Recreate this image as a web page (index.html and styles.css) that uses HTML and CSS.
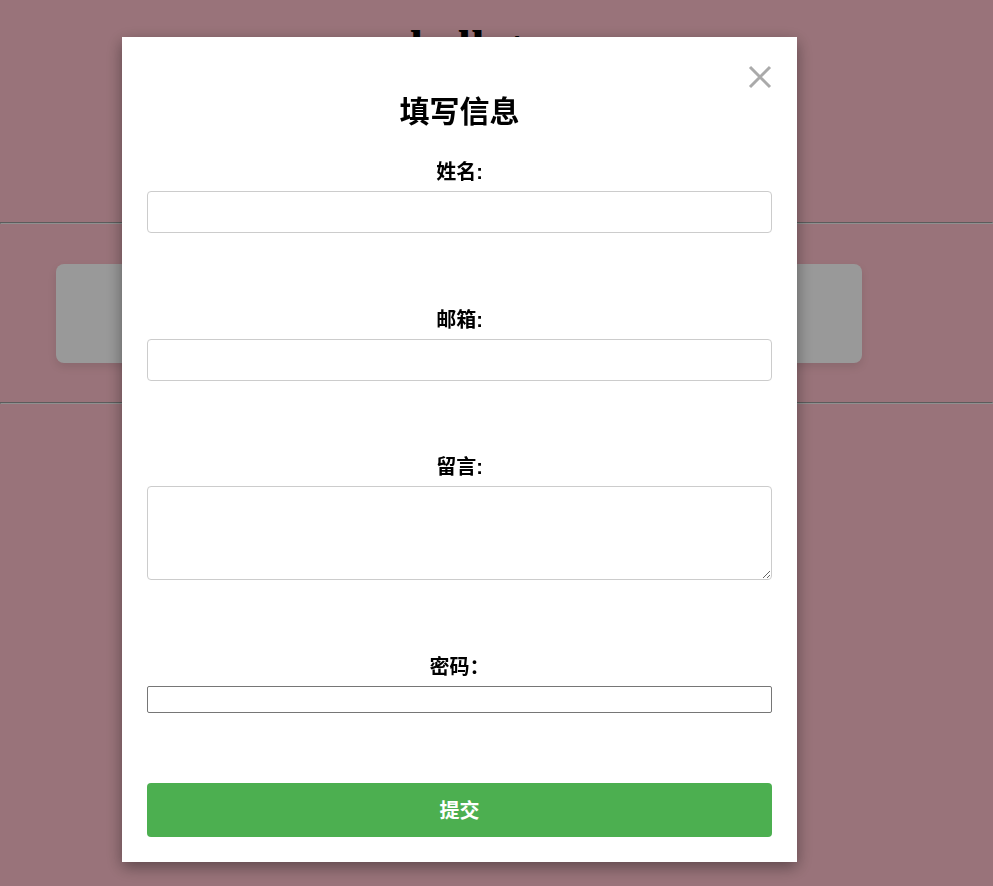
FILE: index.html
```html
<!DOCTYPE html>
<html lang="zh">
<head>
<meta charset="utf-8">
<title>填写信息</title>
<link rel="stylesheet" href="styles.css">
</head>
<body>
  <header class="page-header">
    <h1 class="page-title">hellotwo</h1>
  </header>
  <hr class="divider">
  <div class="card"></div>
  <hr class="divider">

  <div class="overlay">
    <div class="modal">
      <button class="close" type="button" aria-label="关闭">
        <svg viewBox="0 0 24 24" width="24" height="24"><path d="M2 2 L22 22 M22 2 L2 22" stroke="#aaaaaa" stroke-width="3" fill="none"/></svg>
      </button>
      <h2 class="modal-title">填写信息</h2>
      <form class="form">
        <div class="group">
          <label class="label" for="name">姓名:</label>
          <input class="field" id="name" type="text">
        </div>
        <div class="group">
          <label class="label" for="email">邮箱:</label>
          <input class="field" id="email" type="email">
        </div>
        <div class="group">
          <label class="label" for="msg">留言:</label>
          <textarea class="field area" id="msg"></textarea>
        </div>
        <div class="group group-pwd">
          <label class="label label-pwd" for="pwd">密码：</label>
          <input class="pwd" id="pwd" type="password">
        </div>
        <button class="submit" type="button">提交</button>
      </form>
    </div>
  </div>
</body>
</html>
```
FILE: styles.css
```css
html, body {
  margin: 0;
  padding: 0;
}
body {
  background: #ffc0cb;
  font-family: "Liberation Sans", "Noto Sans CJK SC", sans-serif;
  min-height: 886px;
}
.page-header {
  height: 222px;
  padding-top: 20px;
  box-sizing: border-box;
}
.page-title {
  margin: 0;
  font-family: "Liberation Serif", serif;
  font-size: 48px;
  font-weight: bold;
  text-align: center;
  color: #000;
}
.divider {
  margin: 0;
}
.card {
  width: 806px;
  height: 99px;
  margin: 40px 0 39px 56px;
  background: #fff;
  border-radius: 8px;
  box-shadow: 0 4px 8px rgba(0,0,0,0.1);
}
.overlay {
  position: fixed;
  inset: 0;
  background: rgba(0,0,0,0.4);
}
.modal {
  position: relative;
  width: 675px;
  margin: 37px 0 0 122px;
  padding: 25px;
  box-sizing: border-box;
  background: #fff;
  box-shadow: 0 5px 15px rgba(0,0,0,0.4);
}
.close {
  position: absolute;
  top: 28px;
  right: 25px;
  width: 24px;
  height: 24px;
  padding: 0;
  border: 0;
  background: none;
  cursor: pointer;
}
.close svg {
  display: block;
}
.modal-title {
  margin: 29px 0 33px;
  font-family: "Noto Sans CJK SC", sans-serif;
  font-size: 30px;
  line-height: 36px;
  font-weight: bold;
  text-align: center;
  color: #000;
}
.form {
  display: flex;
  flex-direction: column;
}
.group {
  display: flex;
  flex-direction: column;
  margin-bottom: 74.6px;
}
.label {
  font-family: "Liberation Sans", "Noto Sans CJK SC", sans-serif;
  font-size: 20px;
  line-height: 24px;
  font-weight: bold;
  text-align: center;
  margin-bottom: 7px;
  color: #000;
}
.field {
  width: 100%;
  height: 42px;
  box-sizing: border-box;
  border: 1px solid #ccc;
  border-radius: 4px;
  padding: 8px;
  font-size: 16px;
  background: #fff;
}
.area {
  height: 94px;
  resize: both;
  font-family: "Liberation Sans", sans-serif;
}
.group-pwd {
  margin-bottom: 70px;
}
.label-pwd {
  margin-bottom: 7px;
}
.pwd {
  width: 100%;
  height: 27px;
  box-sizing: border-box;
  border: 1px solid #767676;
  border-radius: 2px;
  background: #fff;
}
.submit {
  width: 100%;
  height: 54px;
  border: 0;
  border-radius: 4px;
  background: #4caf50;
  color: #fff;
  font-family: "Noto Sans CJK SC", sans-serif;
  font-size: 20px;
  font-weight: bold;
  cursor: pointer;
}
```
